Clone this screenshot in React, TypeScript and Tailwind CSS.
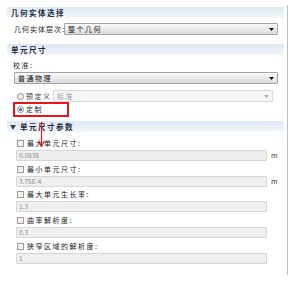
import React from 'react';

function Header({ title, caret }: { title: string; caret?: boolean }) {
  return (
    <div className="h-[11px] flex items-center bg-gradient-to-b from-[#dde7f4] to-[#f4f7fb] pl-[4px] text-[7.5px] font-bold text-[#1c2a3c] rounded-[2px]">
      {caret && <span className="text-[6px] mr-[4px] ml-[-1px] text-[#2a3d55]">▼</span>}
      <span className="tracking-[1.5px]">{title}</span>
    </div>
  );
}

function Combo({ value, disabled, className }: { value: string; disabled?: boolean; className: string }) {
  return (
    <div
      className={
        'h-[12px] flex items-center justify-between px-[3px] border rounded-[1px] ' +
        (disabled
          ? 'border-[#d8d8d8] bg-[#f6f6f6] text-[#9a9a9a]'
          : 'border-[#a4a4a4] bg-gradient-to-b from-[#fafafa] to-[#dcdcdc] text-[#111]') +
        ' ' +
        className
      }
    >
      <span className="text-[7px] tracking-[1.5px] leading-none">{value}</span>
      <svg width="5" height="3" viewBox="0 0 5 3">
        <path d="M0 0 H5 L2.5 3 Z" fill={disabled ? '#b0b0b0' : '#111'} />
      </svg>
    </div>
  );
}

function Radio({ checked }: { checked?: boolean }) {
  return (
    <span className="w-[7px] h-[7px] rounded-full border border-[#8a8a8a] bg-[#f4f4f4] flex items-center justify-center mr-[2px]">
      {checked && <span className="w-[3px] h-[3px] rounded-full bg-[#3a6ea8]" />}
    </span>
  );
}

function Field({ label, value, unit, gap }: { label: string; value: string; unit?: boolean; gap: string }) {
  return (
    <div className={gap}>
      <div className="h-[10px] flex items-center pl-[10px] text-[7px] text-[#222]">
        <span className="w-[7px] h-[7px] border border-[#9a9a9a] bg-[#f2f2f2] mr-[3px]" />
        <span className="tracking-[1.5px]">{label}</span>
      </div>
      <div className="flex items-center mt-[2px]">
        <div className="ml-[9px] w-[251px] h-[11px] border border-[#d6d6d6] bg-[#efefef] rounded-[1px] flex items-center pl-[2px] text-[6.5px] text-[#8c8c8c]">
          {value}
        </div>
        {unit && <span className="ml-[4px] text-[7px] text-[#333]">m</span>}
      </div>
    </div>
  );
}

export default function App() {
  return (
    <div className="w-[298px] h-[282px] bg-white relative" style={{ fontFamily: '"Noto Sans CJK SC", "Liberation Sans", sans-serif' }}>
      <div className="mt-[5px] w-[288px] h-[270px] border-r border-[#a9c6d2] pt-[2px] pl-[7px]">
        <div className="w-[277px]">
          <Header title="几何实体选择" />
          <div className="mt-[5px] h-[12px] flex items-center">
            <span className="pl-[7px] w-[57px] text-[7px] text-[#222] tracking-[1px] whitespace-nowrap">几何实体层次:</span>
            <Combo value="整个几何" className="w-[214px]" />
          </div>

          <div className="mt-[9px]">
            <Header title="单元尺寸" />
          </div>
          <div className="mt-[5px] h-[10px] flex items-center pl-[6px] text-[7px] text-[#222] tracking-[1.5px]">校准:</div>
          <Combo value="普通物理" className="mt-[2px] ml-[7px] w-[264px]" />

          <div className="mt-[6px] h-[12px] flex items-center pl-[10px]">
            <Radio />
            <span className="text-[7px] text-[#333] tracking-[1.5px] w-[27px]">预定义</span>
            <Combo value="标准" disabled className="w-[220px]" />
          </div>
          <div className="ml-[6px] w-[56px] h-[15px] border-2 border-[#e8141a] flex items-center pl-[2px]">
            <Radio checked />
            <span className="text-[7px] text-[#222] tracking-[1.5px]">定制</span>
          </div>

          <div className="mt-[4px]">
            <Header title="单元尺寸参数" caret />
          </div>

          <Field label="最大单元尺寸:" value="0.0838" unit gap="mt-[6px]" />
          <Field label="最小单元尺寸:" value="3.75E-4" unit gap="mt-[3px]" />
          <Field label="最大单元生长率:" value="1.3" gap="mt-[2px]" />
          <Field label="曲率解析度:" value="0.3" gap="mt-[3px]" />
          <Field label="狭窄区域的解析度:" value="1" gap="mt-[3px]" />
        </div>
      </div>

      {/* red arrow */}
      <svg className="absolute left-[37px] top-[117px]" width="9" height="26" viewBox="0 0 9 26">
        <path d="M4.5 0 V23" stroke="#e8141a" strokeWidth="1.2" />
        <path d="M1.5 19 L4.5 24 L7.5 19" stroke="#e8141a" strokeWidth="1.2" fill="none" />
      </svg>
    </div>
  );
}
